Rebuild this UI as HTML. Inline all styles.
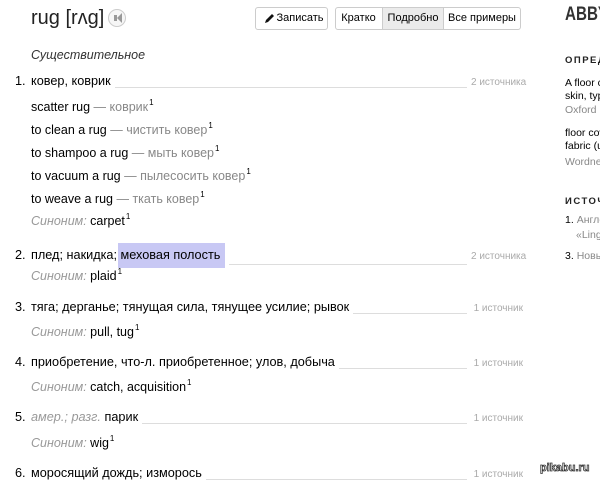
<!DOCTYPE html>
<html style="overflow:hidden"><head><meta charset="utf-8"><style>
*{margin:0;padding:0;box-sizing:border-box}
body{width:600px;height:482px;overflow:hidden;background:#fff;font-family:"Liberation Sans",Arial,sans-serif;color:#000;position:relative}
.a{position:absolute;white-space:nowrap}
.t{font-size:12.5px;line-height:16px}
.row{position:absolute;left:15px;width:508px;display:flex;align-items:baseline;font-size:12.7px;line-height:16px;white-space:nowrap}
.row .n{width:16px}
.row .ln{flex:1;border-bottom:1px solid #ddd;margin:0 4px 0 4px;align-self:flex-end;margin-bottom:3px}
.row .s{font-size:10px;color:#aaa;width:52px;text-align:right}
.g{color:#888}
.i{color:#999;font-style:italic}
sup{font-size:8px;vertical-align:6px;margin-left:1px}
.btn{position:absolute;top:7px;height:23px;border:1px solid #ccc;border-radius:3px;font-size:11px;line-height:21px;text-align:center;background:#fff}
.h{font-size:9.5px;font-weight:bold;letter-spacing:1.5px;color:#222}
.r{font-size:10.5px;line-height:13px}
</style></head><body>
<div class="a" style="left:31px;top:5px;font-size:20px;line-height:26px;color:#222">rug [rʌg]</div>
<div class="a" style="left:108px;top:9px;width:18px;height:18px;border:1px solid #ccc;border-radius:50%;background:#f6f6f6"><div style="position:absolute;left:5px;top:5px;width:3px;height:6px;background:#999"></div><div style="position:absolute;left:8px;top:3px;width:0;height:0;border-top:5px solid transparent;border-bottom:5px solid transparent;border-right:5px solid #999"></div></div>
<div class="btn" style="left:255px;width:73px"><svg width="11" height="11" viewBox="0 0 11 11" style="position:absolute;left:8px;top:5px"><path d="M1 10 L2 7 L8 1 L10 3 L4 9 Z" fill="#111"/></svg><span style="margin-left:17px">Записать</span></div>
<div class="btn" style="left:335px;width:186px;padding:0"></div>
<div class="a" style="left:335px;top:7px;width:47px;height:23px;line-height:23px;text-align:center;font-size:11px">Кратко</div>
<div class="a" style="left:382px;top:8px;width:62px;height:21px;line-height:21px;text-align:center;font-size:11px;background:#ebebeb;border-left:1px solid #ccc;border-right:1px solid #ccc">Подробно</div>
<div class="a" style="left:444px;top:7px;width:76px;height:23px;line-height:23px;text-align:center;font-size:11px">Все примеры</div>
<div class="a" style="left:565px;top:4px;font-size:19px;font-weight:bold;color:#333;font-family:'Liberation Sans',sans-serif;transform:scaleX(0.8);transform-origin:left">ABBYY</div>

<div class="a t i" style="left:31px;top:47px;color:#333">Существительное</div>

<div class="row" style="top:73px"><span class="n">1.</span>ковер, коврик<span class="ln"></span><span class="s">2 источника</span></div>
<div class="a t" style="left:31px;top:95px">scatter rug <span class="g">— коврик</span><sup>1</sup></div>
<div class="a t" style="left:31px;top:118px">to clean a rug <span class="g">— чистить ковер</span><sup>1</sup></div>
<div class="a t" style="left:31px;top:141px">to shampoo a rug <span class="g">— мыть ковер</span><sup>1</sup></div>
<div class="a t" style="left:31px;top:164px">to vacuum a rug <span class="g">— пылесосить ковер</span><sup>1</sup></div>
<div class="a t" style="left:31px;top:187px">to weave a rug <span class="g">— ткать ковер</span><sup>1</sup></div>
<div class="a t" style="left:31px;top:209px"><span class="i">Синоним:</span> carpet<sup>1</sup></div>

<div class="row" style="top:243px"><span class="n">2.</span>плед; накидка;&nbsp;<span style="background:#c8c8f4;padding:4px 5px 5px 3px;margin-left:-3px">меховая полость</span><span class="ln"></span><span class="s">2 источника</span></div>
<div class="a t" style="left:31px;top:264px"><span class="i">Синоним:</span> plaid<sup>1</sup></div>

<div class="row" style="top:299px"><span class="n">3.</span>тяга; дерганье; тянущая сила, тянущее усилие; рывок<span class="ln"></span><span class="s">1 источник</span></div>
<div class="a t" style="left:31px;top:320px"><span class="i">Синоним:</span> pull, tug<sup>1</sup></div>

<div class="row" style="top:354px"><span class="n">4.</span>приобретение, что-л. приобретенное; улов, добыча<span class="ln"></span><span class="s">1 источник</span></div>
<div class="a t" style="left:31px;top:375px"><span class="i">Синоним:</span> catch, acquisition<sup>1</sup></div>

<div class="row" style="top:409px"><span class="n">5.</span><span class="i">амер.; разг.</span>&nbsp;парик<span class="ln"></span><span class="s">1 источник</span></div>
<div class="a t" style="left:31px;top:431px"><span class="i">Синоним:</span> wig<sup>1</sup></div>

<div class="row" style="top:465px"><span class="n">6.</span>моросящий дождь; изморось<span class="ln"></span><span class="s">1 источник</span></div>
<div class="a" style="left:540px;top:462px;font-size:11px;font-weight:bold;color:#fff;-webkit-text-stroke:0.8px #333">pikabu.ru</div>

<div class="a h" style="left:565px;top:55px">ОПРЕДЕЛЕНИЯ</div>
<div class="a r" style="left:565px;top:77px">A floor covering of thick</div>
<div class="a r" style="left:565px;top:90px">skin, typically</div>
<div class="a r" style="left:565px;top:104px;color:#888">Oxford Dictionaries</div>
<div class="a r" style="left:565px;top:127px">floor covering made of</div>
<div class="a r" style="left:565px;top:140px">fabric (usually)</div>
<div class="a r" style="left:565px;top:156px;color:#888">Wordnet</div>
<div class="a h" style="left:565px;top:196px">ИСТОЧНИКИ</div>
<div class="a r" style="left:565px;top:214px"><span>1.</span> <span style="color:#888">Англо-русский</span></div>
<div class="a r" style="left:576px;top:229px;color:#888">«Lingvo»</div>
<div class="a r" style="left:565px;top:250px"><span>3.</span> <span style="color:#888">Новый</span></div>
</body></html>
